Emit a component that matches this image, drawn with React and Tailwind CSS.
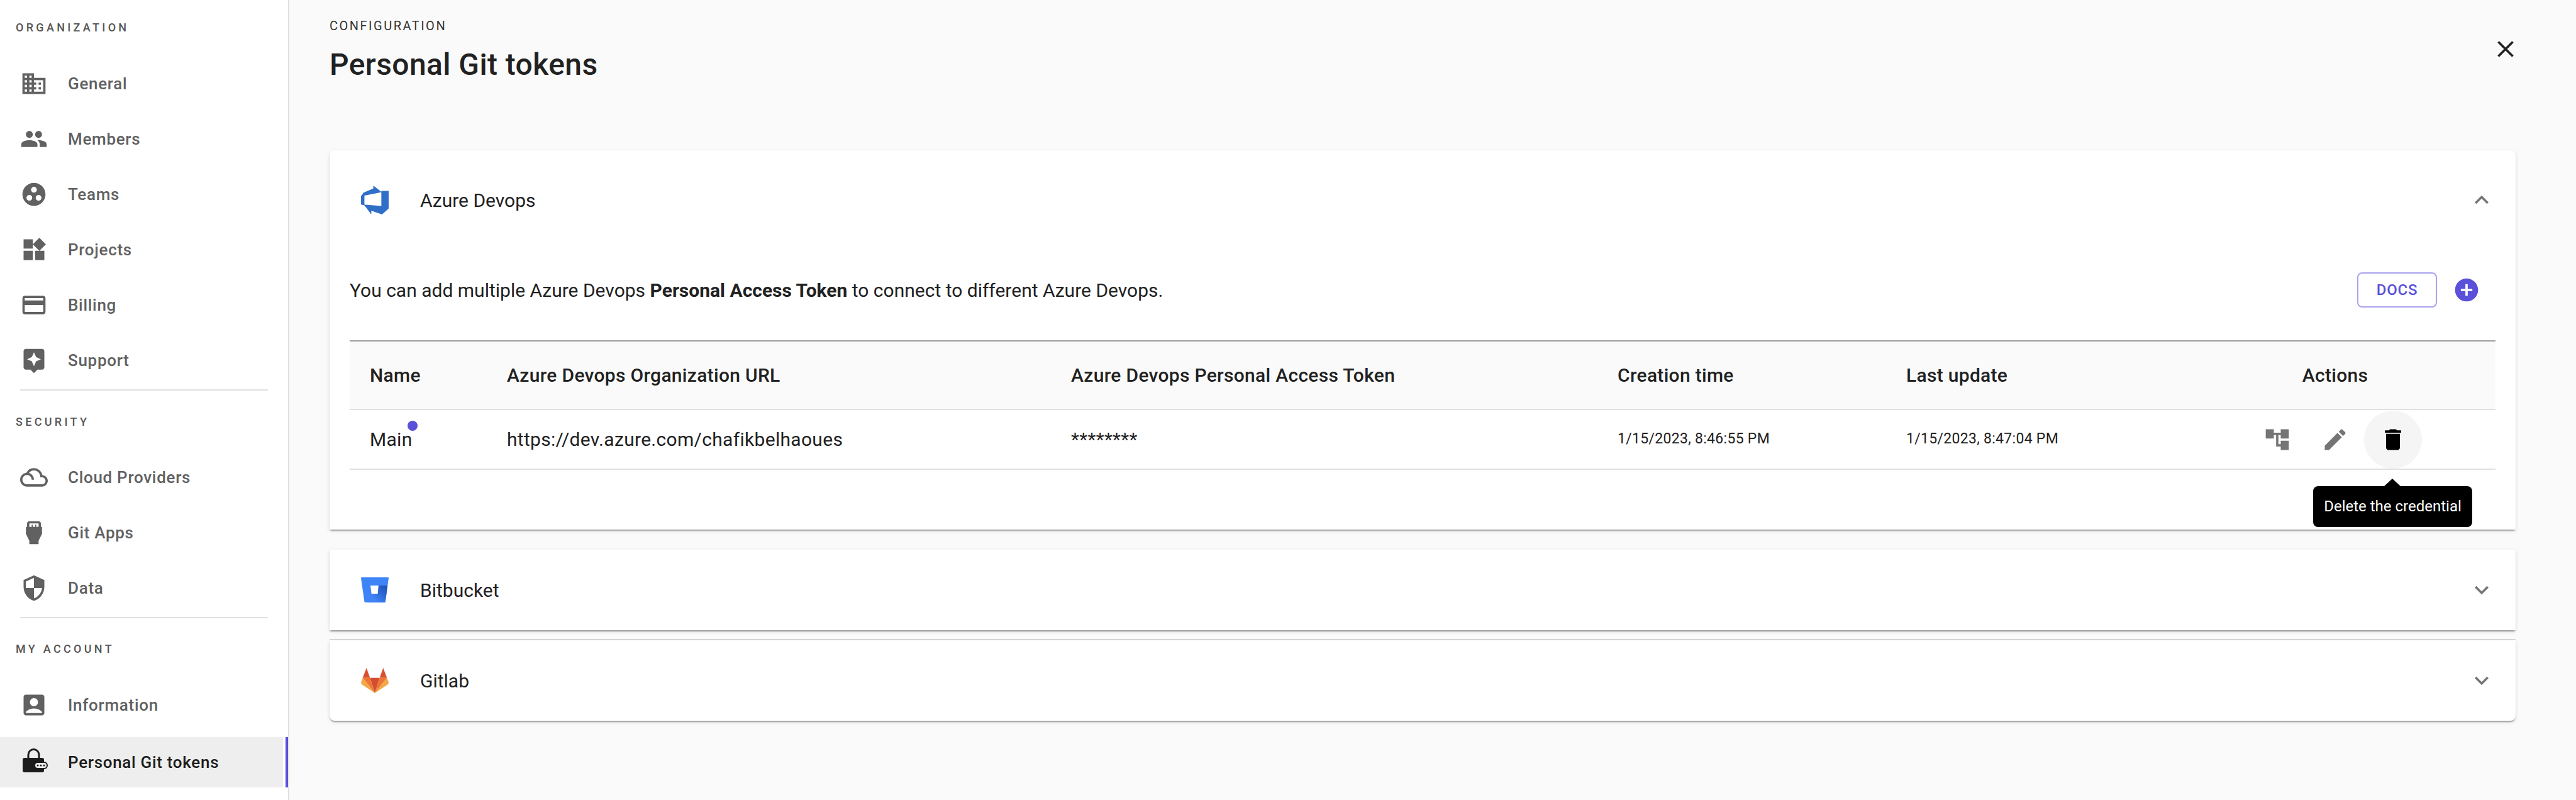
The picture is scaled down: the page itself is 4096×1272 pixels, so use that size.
import React from "react";
import {
  MdDomain, MdPeople, MdGroupWork, MdWidgets, MdCreditCard, MdAssistant,
  MdFilterDrama, MdSettingsInputHdmi, MdSecurity, MdAccountBox, MdClose,
  MdExpandLess, MdExpandMore, MdAddCircle, MdAccountTree, MdEdit, MdDelete,
} from "react-icons/md";

function LockIcon() {
  return (
    <svg width="44" height="44" viewBox="0 0 44 44" className="shrink-0">
      <path d="M14 16V10a8.5 8.5 0 0 1 17 0v6" transform="translate(-1 0)" fill="none" stroke="#1c1c1c" strokeWidth="3" />
      <rect x="4" y="15" width="34" height="23" rx="3" fill="#1c1c1c" />
      <rect x="22" y="21" width="22" height="12" rx="6" fill="#1c1c1c" />
      <rect x="24" y="23" width="18" height="8" rx="4" fill="#eeeeee" />
      <circle cx="28" cy="27" r="1.5" fill="#1c1c1c" />
      <circle cx="33" cy="27" r="1.5" fill="#1c1c1c" />
      <circle cx="38" cy="27" r="1.5" fill="#1c1c1c" />
    </svg>
  );
}

function AzureLogo() {
  return (
    <svg width="44" height="46" viewBox="0 0 24 24" preserveAspectRatio="none" className="shrink-0">
      <path fill="#2f6fc8" d="M0 8.877L2.247 5.91l8.405-3.416V.022l7.37 5.393L2.966 8.338v8.225L0 15.707zm24-4.45v14.651l-5.753 4.9-9.303-3.057v3.056l-6.512-8.137 15.228 1.167V4.427z" />
    </svg>
  );
}

function BitbucketLogo() {
  return (
    <svg width="44" height="40" viewBox="0 0 44 40" className="shrink-0">
      <defs>
        <linearGradient id="bbg" x1="1" y1="0.1" x2="0.25" y2="0.75">
          <stop offset="0" stopColor="#1c4fb5" />
          <stop offset="1" stopColor="#3f84f7" />
        </linearGradient>
      </defs>
      <path fillRule="evenodd" fill="#3f84f7" d="M1 0H43a1 1 0 0 1 1 1L38.8 38.6a1.5 1.5 0 0 1-1.5 1.2H6.9a1.5 1.5 0 0 1-1.5-1.2L0 1a1 1 0 0 1 1-1ZM15 13L16.7 26.3H26.7L28 13Z" />
      <path fill="url(#bbg)" d="M28 13H42.2L38.8 38.6a1.5 1.5 0 0 1-1.5 1.2H11L16.7 26.3H26.7Z" />
    </svg>
  );
}

function GitlabLogo() {
  return (
    <svg width="44" height="40" viewBox="0 0 44 40" className="shrink-0">
      <polygon points="8.7,0 2.7,15.7 14.3,15.7" fill="#d9512f" />
      <polygon points="35.3,0 41.3,15.7 29.7,15.7" fill="#d9512f" />
      <polygon points="14.3,15.7 29.7,15.7 22,40" fill="#d34e31" />
      <polygon points="2.7,15.7 14.3,15.7 22,40" fill="#ee7534" />
      <polygon points="41.3,15.7 29.7,15.7 22,40" fill="#ee7534" />
      <polygon points="2.7,15.7 0,23 1,26 22,40" fill="#f2a848" />
      <polygon points="41.3,15.7 44,23 43,26 22,40" fill="#f2a848" />
    </svg>
  );
}

function Label({ children, className }) {
  return (
    <div className={`h-[30px] pl-[25px] flex items-center text-[18px] font-medium tracking-[4.3px] text-[#555555] ${className}`}>
      {children}
    </div>
  );
}

function NavRow({ icon: Icon, label }) {
  return (
    <div className="h-[80px] pl-[32px] flex items-center text-[#616161]">
      <Icon size={44} className="shrink-0" />
      <span className="ml-[32px] text-[26px] font-medium tracking-[0.7px]">{label}</span>
    </div>
  );
}

function Divider() {
  return <div className="ml-[32px] w-[394px] h-[2px] bg-[#e0e0e0]" />;
}

const columns = "grid grid-cols-[218px_897px_869px_459px_459px_510px]";

function Sidebar() {
  return (
    <aside className="w-[460px] h-[1272px] shrink-0 bg-white border-r-2 border-[#e0e0e0] pt-[28px]">
      <Label className="mb-[35px]">ORGANIZATION</Label>
      <div className="flex flex-col gap-2">
        <NavRow icon={MdDomain} label="General" />
        <NavRow icon={MdPeople} label="Members" />
        <NavRow icon={MdGroupWork} label="Teams" />
        <NavRow icon={MdWidgets} label="Projects" />
        <NavRow icon={MdCreditCard} label="Billing" />
        <NavRow icon={MdAssistant} label="Support" />
      </div>
      <div className="mt-[6px]"><Divider /></div>
      <Label className="mt-[34px] mb-[34px]">SECURITY</Label>
      <div className="flex flex-col gap-2">
        <NavRow icon={MdFilterDrama} label="Cloud Providers" />
        <NavRow icon={MdSettingsInputHdmi} label="Git Apps" />
        <NavRow icon={MdSecurity} label="Data" />
      </div>
      <div className="mt-[6px]"><Divider /></div>
      <Label className="mt-[33px] mb-[35px]">MY ACCOUNT</Label>
      <NavRow icon={MdAccountBox} label="Information" />
      <div className="mt-[11px] flex gap-1">
        <div className="w-[450px] h-[80px] pl-[32px] bg-[#eeeeee] flex items-center text-[#1c1c1c]">
          <LockIcon />
          <span className="ml-[32px] text-[26px] font-medium tracking-[0.7px]">Personal Git tokens</span>
        </div>
        <div className="w-[4px] h-[80px] bg-[#5a50d9]" />
      </div>
    </aside>
  );
}

function CredentialsTable() {
  return (
    <div className="border-t-2 border-[#9e9e9e] text-[#212121]">
      <div className={`${columns} h-[109px] bg-[#fafafa] border-b-2 border-[#e0e0e0] items-center text-[30px] font-medium tracking-[0.3px]`}>
        <div className="pl-[32px]">Name</div>
        <div className="pl-[32px]">Azure Devops Organization URL</div>
        <div className="pl-[32px]">Azure Devops Personal Access Token</div>
        <div className="pl-[32px]">Creation time</div>
        <div className="pl-[32px]">Last update</div>
        <div className="text-center">Actions</div>
      </div>
      <div className={`${columns} h-[95px] border-b-2 border-[#e0e0e0] items-center text-[30px] tracking-[0.3px]`}>
        <div className="pl-[32px]">
          <span className="relative">
            Main
            <span className="absolute left-[60px] top-[-12px] w-[16px] h-[16px] rounded-full bg-[#5a50d9]" />
          </span>
        </div>
        <div className="pl-[32px]">https://dev.azure.com/chafikbelhaoues</div>
        <div className="pl-[32px]">********</div>
        <div className="pl-[32px] text-[23px]">1/15/2023, 8:46:55 PM</div>
        <div className="pl-[32px] text-[23px]">1/15/2023, 8:47:04 PM</div>
        <div className="relative flex items-center pl-[141px]">
          <MdAccountTree size={44} className="text-[#757575] shrink-0" />
          <MdEdit size={44} className="ml-[48px] text-[#757575] shrink-0" />
          <div className="ml-[24px] w-[92px] h-[92px] rounded-full bg-[#f5f5f5] flex items-center justify-center shrink-0">
            <MdDelete size={44} className="text-black" />
          </div>
          <div className="absolute left-[220px] top-[120px] w-[253px] h-[65px] rounded-[8px] bg-black text-white text-[24px] tracking-normal flex items-center justify-center whitespace-nowrap">
            Delete the credential
            <span className="absolute left-[113px] top-[-12px] w-0 h-0 border-l-[13px] border-r-[13px] border-b-[12px] border-l-transparent border-r-transparent border-b-black" />
          </div>
        </div>
      </div>
    </div>
  );
}

const cardShadow = "shadow-[0_4px_2px_-2px_rgba(0,0,0,0.2),0_2px_2px_0_rgba(0,0,0,0.14),0_2px_6px_0_rgba(0,0,0,0.12)]";

function CollapsedHeader({ logo, title, expanded }) {
  const Chevron = expanded ? MdExpandLess : MdExpandMore;
  return (
    <div className={`${expanded ? "h-[158px]" : "h-[128px]"} pl-[50px] pr-[32px] flex items-center`}>
      {logo}
      <span className="ml-[50px] flex-1 text-[30px] text-[#212121]">{title}</span>
      <Chevron size={44} className="text-[#757575]" />
    </div>
  );
}

export default function App() {
  return (
    <div className="flex w-full h-[1272px] overflow-hidden font-[Roboto,sans-serif] bg-[#fafafa]">
      <Sidebar />
      <main className="flex-1 pl-[64px] pr-[96px]">
        <div className="h-[239px] flex justify-between">
          <div className="pt-[26px]">
            <div className="h-[30px] flex items-center text-[20px] tracking-[2.5px] text-[#333333]">CONFIGURATION</div>
            <h1 className="mt-[17px] h-[60px] flex items-center text-[48px] font-medium tracking-[0.4px] text-[#212121]">Personal Git tokens</h1>
          </div>
          <MdClose size={44} className="mt-[56px] mr-[-6px] text-[#212121]" />
        </div>
        <section className={`bg-white rounded-t-[8px] h-[603px] ${cardShadow}`}>
          <CollapsedHeader logo={<AzureLogo />} title="Azure Devops" expanded />
          <div className="px-[32px]">
            <div className="h-[144px] pb-[16px] flex items-center">
              <p className="flex-1 text-[30px] text-[#212121]">
                You can add multiple Azure Devops <b className="font-bold">Personal Access Token</b> to connect to different Azure Devops.
              </p>
              <div className="w-[127px] h-[56px] rounded-[8px] border-2 border-[#a8a2ee] flex items-center justify-center text-[24px] font-medium tracking-[0.8px] text-[#5a50d9]">DOCS</div>
              <MdAddCircle size={44} className="ml-[25px] mr-[24px] text-[#5a50d9]" />
            </div>
            <CredentialsTable />
          </div>
        </section>
        <section className={`mt-[32px] bg-white ${cardShadow}`}>
          <CollapsedHeader logo={<BitbucketLogo />} title="Bitbucket" />
        </section>
        <div className="mt-[14px] h-[2px] bg-[#d9d9d9]" />
        <section className={`bg-white rounded-b-[8px] ${cardShadow}`}>
          <CollapsedHeader logo={<GitlabLogo />} title="Gitlab" />
        </section>
      </main>
    </div>
  );
}
